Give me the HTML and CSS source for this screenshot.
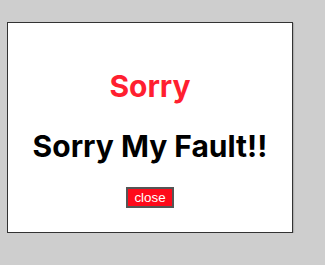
FILE: index.html
```html
<!DOCTYPE html>
<html lang="en">
<head>
    <meta charset="UTF-8">
    <meta name="viewport" content="width=device-width, initial-scale=1.0">
    <title>Sorry</title>
    <link rel="stylesheet" href="styles.css">
</head>
<body>
    <!-- Apology dialog -->
    <div class="dialog">
        <h2 class="dialog-title">Sorry</h2>
        <p class="dialog-message">Sorry My Fault!!</p>
        <button class="close-btn">close</button>
    </div>
</body>
</html>
```

FILE: styles.css
```css
/* General Styles */
body {
    font-family: Inter, "Liberation Sans", Arial, sans-serif;
    margin: 0;
    padding: 22px 0 0 7px;
    background-color: #cecece; /* Light gray page */
}

/* Dialog box */
.dialog {
    width: 286px;
    height: 211px;
    box-sizing: border-box;
    background-color: #fff;
    border: 1px solid #333;
    box-shadow: 1px 1px 1px rgba(0, 0, 0, 0.15);
    padding-top: 45px;
    display: flex;
    flex-direction: column;
    align-items: center;
}

.dialog-title,
.dialog-message {
    font-size: 30px;
    font-weight: bold;
    line-height: 36px;
    margin: 0;
}

.dialog-title {
    color: #ff1f30; /* Red heading */
}

.dialog-message {
    color: #000;
    margin-top: 24px;
}

/* Close button */
.close-btn {
    margin-top: 23px;
    font-family: "Liberation Sans", Arial, sans-serif;
    font-size: 13.33px;
    color: #fff;
    background-color: #ff0a1a;
    border: 2px solid #555;
    padding: 1px 6px;
    cursor: pointer;
}
```
